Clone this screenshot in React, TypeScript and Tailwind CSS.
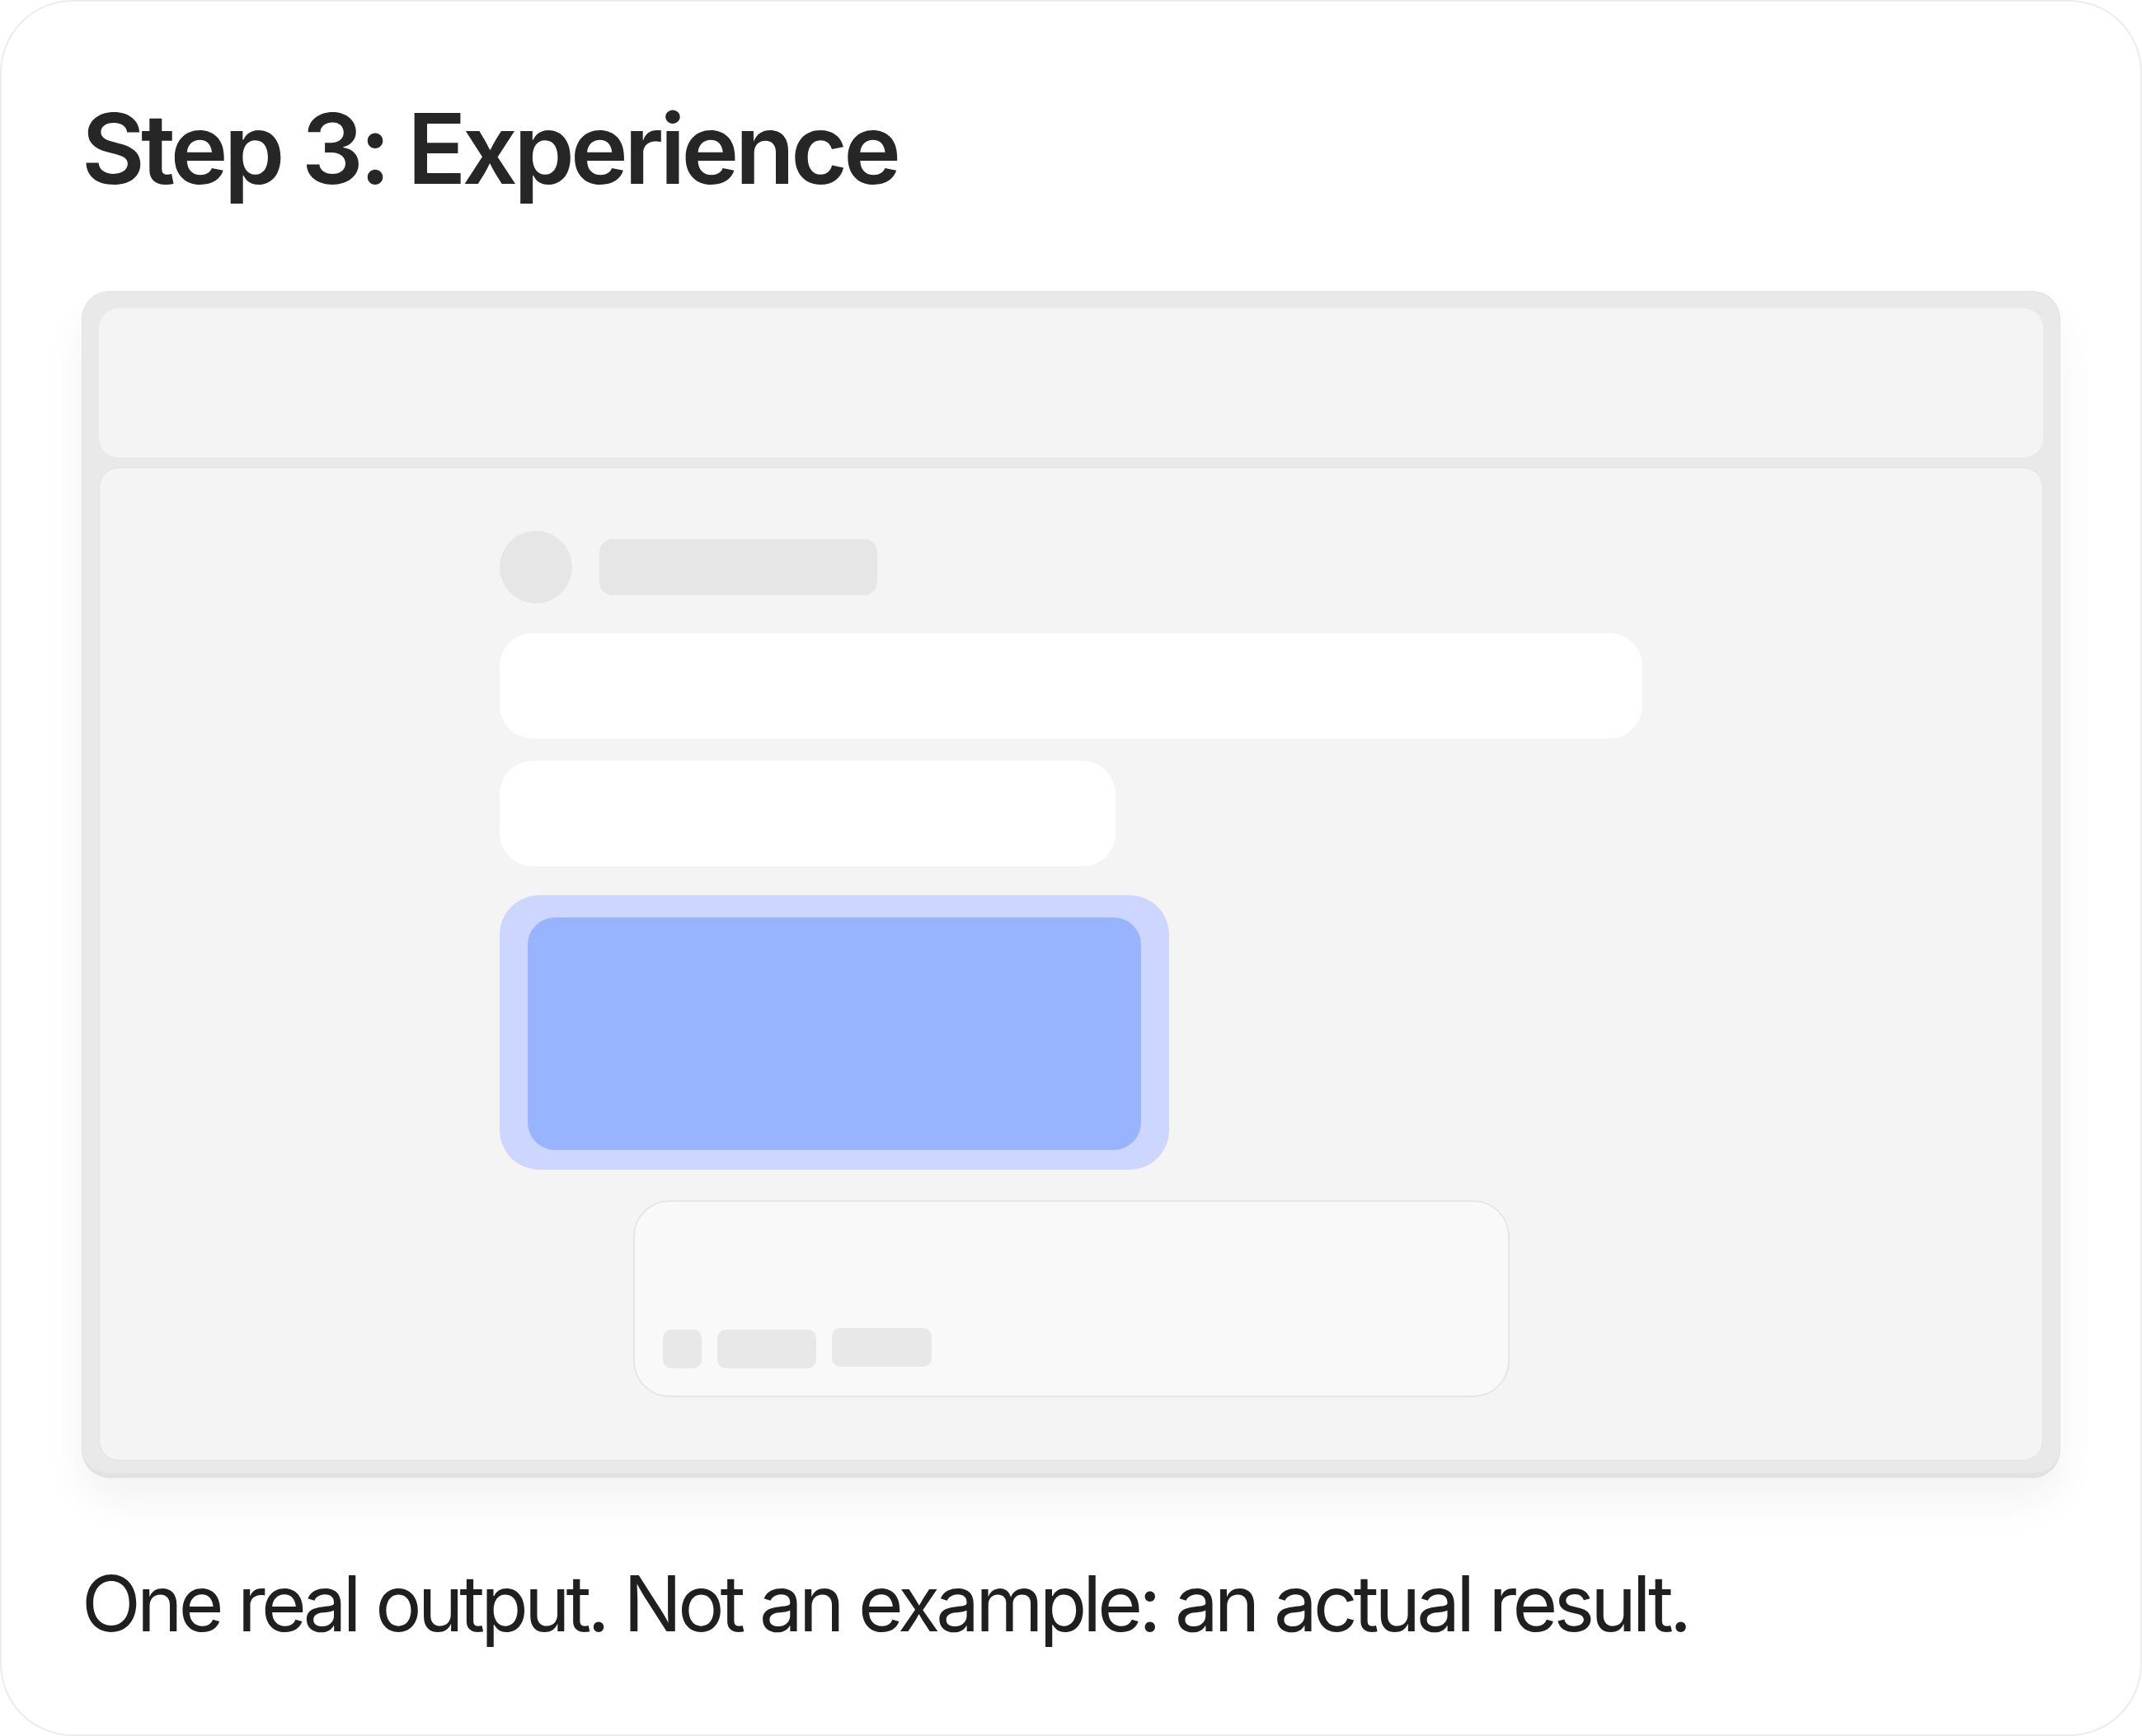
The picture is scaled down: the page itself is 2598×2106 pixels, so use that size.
import React from "react";

export default function App() {
  return (
    <div className="w-[2598px] h-[2106px] bg-white">
      <div
        className="w-full h-full rounded-[88px] border-2 border-[#ececec] bg-white pl-[97px] pr-[97px] pt-[119px] flex flex-col"
        style={{ fontFamily: "Inter, 'Noto Sans', sans-serif" }}
      >
        <h1 className="text-[118px] leading-none font-semibold tracking-[-0.04em] text-[#262626]">
          Step 3: Experience
        </h1>

        <div className="mt-[114px] w-[2400px] rounded-[34px] border border-b-[6px] border-[#e2e2e2] bg-[#e9e9e9] pt-[20px] px-[20px] pb-[15px] shadow-[0_28px_50px_rgba(0,0,0,0.05)] flex flex-col gap-[12px]">
          <div className="h-[181px] rounded-[24px] bg-[#f4f4f4]" />
          <div className="h-[1205px] rounded-[24px] border border-[#e2e2e2] bg-[#f4f4f4] pt-[76px] flex flex-col items-center">
            <div className="w-[1386px] flex flex-col">
              <div className="flex items-center gap-[33px]">
                <div className="w-[88px] h-[88px] rounded-full bg-[#e6e6e6]" />
                <div className="w-[337px] h-[68px] rounded-[16px] bg-[#e6e6e6]" />
              </div>
              <div className="mt-[36px] w-[1386px] h-[128px] rounded-[40px] bg-white" />
              <div className="mt-[27px] w-[747px] h-[128px] rounded-[40px] bg-white" />
              <div className="mt-[35px] w-[812px] h-[333px] rounded-[48px] bg-[#cdd6ff] px-[34px] pt-[27px] pb-[24px]">
                <div className="w-full h-full rounded-[33px] bg-[#99b4ff]" />
              </div>
              <div className="mt-[37px] self-center w-[1063px] h-[239px] rounded-[44px] border-2 border-[#e6e6e6] bg-[#f9f9f9] flex items-end pl-[34px] pb-[33px] gap-[19px]">
                <div className="w-[47px] h-[47px] rounded-[10px] bg-[#e8e8e8]" />
                <div className="w-[120px] h-[47px] rounded-[10px] bg-[#e8e8e8]" />
                <div className="w-[121px] h-[47px] rounded-[10px] bg-[#e8e8e8] mb-[2px]" />
              </div>
            </div>
          </div>
        </div>

        <p className="mt-[105px] text-[94px] leading-none font-normal tracking-[-0.052em] text-[#1f1f1f]">
          One real output. Not an example: an actual result.
        </p>
      </div>
    </div>
  );
}
